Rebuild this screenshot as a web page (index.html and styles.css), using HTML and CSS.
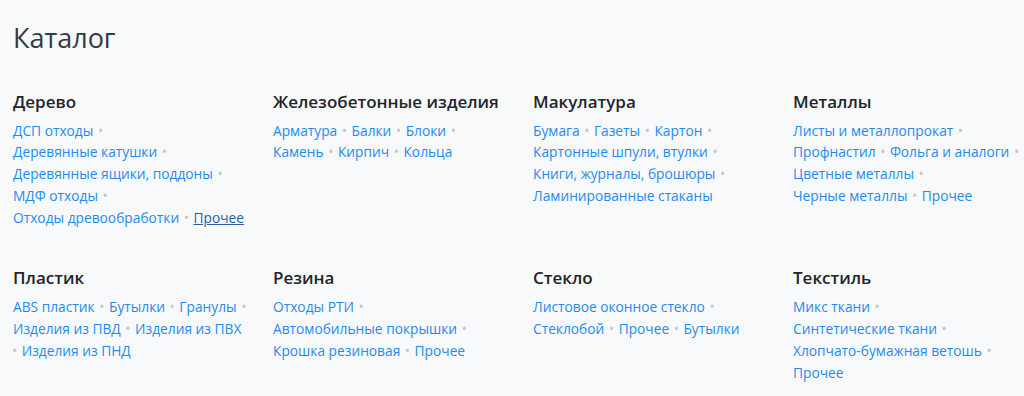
FILE: index.html
```html
<!DOCTYPE html>
<html lang="ru">
<head>
  <meta charset="UTF-8">
  <meta name="viewport" content="width=device-width, initial-scale=1.0">
  <title>Каталог</title>
  <link rel="stylesheet" href="styles.css">
</head>
<body>
  <!-- Каталог категорий -->
  <div class="catalog">
    <h1 class="catalog-title">Каталог</h1>

    <div class="catalog-grid">
      <div class="category">
        <h3 class="category-title">Дерево</h3>
        <div class="category-links">
          <a href="#">ДСП отходы</a> <span class="sep">•</span>
          <a href="#">Деревянные катушки</a> <span class="sep">•</span>
          <a href="#">Деревянные ящики, поддоны</a> <span class="sep">•</span>
          <a href="#">МДФ отходы</a> <span class="sep">•</span>
          <a href="#">Отходы древообработки</a> <span class="sep">•</span>
          <a href="#" class="active">Прочее</a>
        </div>
      </div>

      <div class="category">
        <h3 class="category-title">Железобетонные изделия</h3>
        <div class="category-links">
          <a href="#">Арматура</a> <span class="sep">•</span>
          <a href="#">Балки</a> <span class="sep">•</span>
          <a href="#">Блоки</a> <span class="sep">•</span>
          <a href="#">Камень</a> <span class="sep">•</span>
          <a href="#">Кирпич</a> <span class="sep">•</span>
          <a href="#">Кольца</a>
        </div>
      </div>

      <div class="category">
        <h3 class="category-title">Макулатура</h3>
        <div class="category-links">
          <a href="#">Бумага</a> <span class="sep">•</span>
          <a href="#">Газеты</a> <span class="sep">•</span>
          <a href="#">Картон</a> <span class="sep">•</span>
          <a href="#">Картонные шпули, втулки</a> <span class="sep">•</span>
          <a href="#">Книги, журналы, брошюры</a> <span class="sep">•</span>
          <a href="#">Ламинированные стаканы</a>
        </div>
      </div>

      <div class="category">
        <h3 class="category-title">Металлы</h3>
        <div class="category-links">
          <a href="#">Листы и металлопрокат</a> <span class="sep">•</span>
          <a href="#">Профнастил</a> <span class="sep">•</span>
          <a href="#">Фольга и аналоги</a> <span class="sep">•</span>
          <a href="#">Цветные металлы</a> <span class="sep">•</span>
          <a href="#">Черные металлы</a> <span class="sep">•</span>
          <a href="#">Прочее</a>
        </div>
      </div>

      <div class="category">
        <h3 class="category-title">Пластик</h3>
        <div class="category-links">
          <a href="#">ABS пластик</a> <span class="sep">•</span>
          <a href="#">Бутылки</a> <span class="sep">•</span>
          <a href="#">Гранулы</a> <span class="sep">•</span>
          <a href="#">Изделия из ПВД</a> <span class="sep">•</span>
          <a href="#">Изделия из ПВХ</a> <span class="sep">•</span>
          <a href="#">Изделия из ПНД</a>
        </div>
      </div>

      <div class="category">
        <h3 class="category-title">Резина</h3>
        <div class="category-links">
          <a href="#">Отходы РТИ</a> <span class="sep">•</span>
          <a href="#">Автомобильные покрышки</a> <span class="sep">•</span>
          <a href="#">Крошка резиновая</a> <span class="sep">•</span>
          <a href="#">Прочее</a>
        </div>
      </div>

      <div class="category">
        <h3 class="category-title">Стекло</h3>
        <div class="category-links">
          <a href="#">Листовое оконное стекло</a> <span class="sep">•</span>
          <a href="#">Стеклобой</a> <span class="sep">•</span>
          <a href="#">Прочее</a> <span class="sep">•</span>
          <a href="#">Бутылки</a>
        </div>
      </div>

      <div class="category">
        <h3 class="category-title">Текстиль</h3>
        <div class="category-links">
          <a href="#">Микс ткани</a> <span class="sep">•</span>
          <a href="#">Синтетические ткани</a> <span class="sep">•</span>
          <a href="#">Хлопчато-бумажная ветошь</a> <span class="sep">•</span>
          <a href="#">Прочее</a>
        </div>
      </div>
    </div>
  </div>
</body>
</html>
```

FILE: styles.css
```css
/* Страница */
body {
  margin: 0;
  background: #f8f9fa;
  font-family: "Open Sans", "Noto Sans", Arial, sans-serif;
  color: #212529;
}

/* Обёртка каталога */
.catalog {
  padding: 18px 3px 0 13px;
}

/* Заголовок страницы */
.catalog-title {
  margin: 0 0 31px;
  font-size: 27px;
  font-weight: 400;
  line-height: 1.5;
  color: #343a40;
}

/* Сетка категорий */
.catalog-grid {
  display: grid;
  grid-template-columns: repeat(3, 236px) 1fr;
  column-gap: 24px;
  row-gap: 38px;
}

/* Название категории */
.category-title {
  margin: 0 0 6px;
  font-size: 17px;
  font-weight: 600;
  line-height: 24px;
  color: #212529;
}

/* Список ссылок */
.category-links {
  margin-left: -1px;
  font-size: 13.75px;
  line-height: 21.75px;
}

.category-links a {
  margin: 0 1px;
  color: #1f8af3;
  text-decoration: none;
  white-space: nowrap;
}

.category-links a.active {
  color: #2b5ea8;
  text-decoration: underline;
}

/* Разделитель */
.sep {
  color: #c4c7ca;
  line-height: 1;
}
```
